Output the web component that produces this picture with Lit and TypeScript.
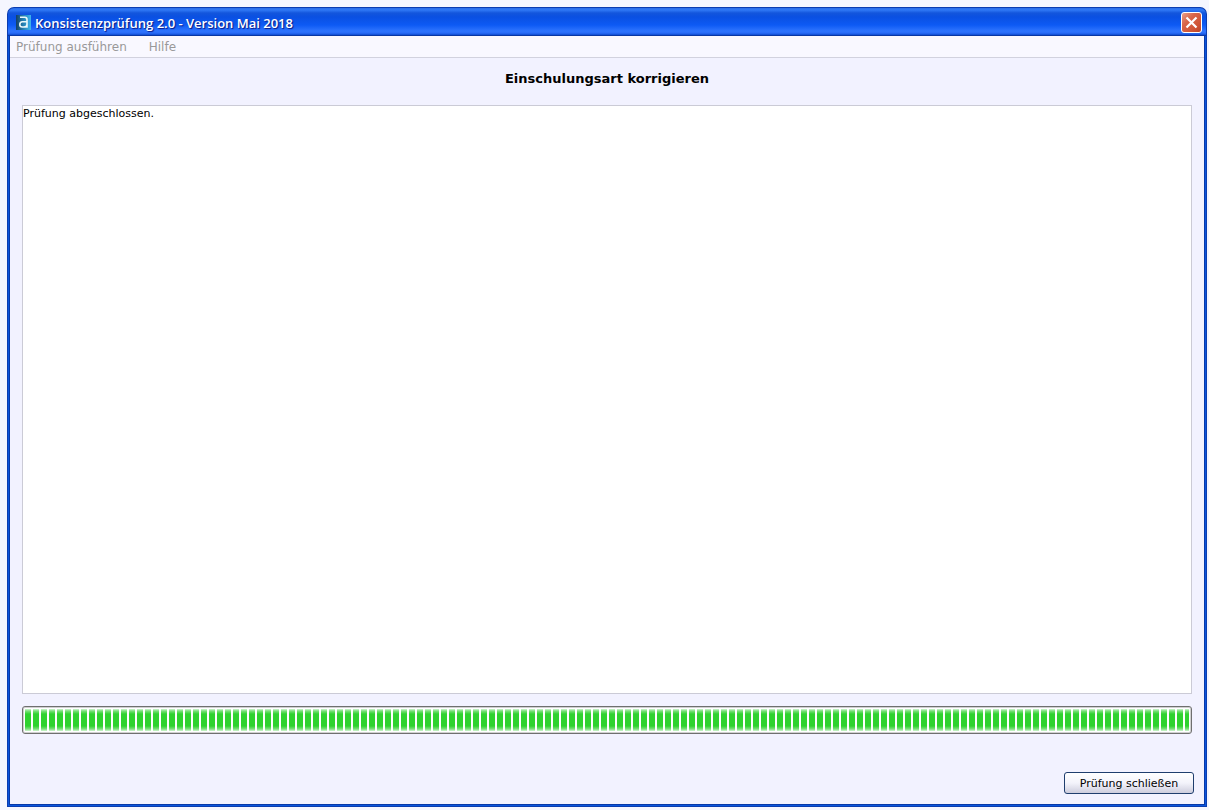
import { LitElement, html, css } from "lit";
import { customElement, property, state } from "lit/decorators.js";

@customElement("title-bar")
class TitleBar extends LitElement {
  @property() caption = "";

  static styles = css`
    :host {
      display: flex;
      align-items: center;
      gap: 4px;
      box-sizing: border-box;
      height: 29px;
      padding: 2px 4px 0 8px;
      border: 1px solid #0b3cb0;
      border-bottom-color: #0a37a4;
      border-radius: 7px 7px 0 0;
      background: linear-gradient(#2a6ce8 0, #2f78f6 2px, #1356dc 5px, #0a50e2 9px, #0d5af4 17px, #2e74fe 23px, #2a6cf8 25px, #0f4bd0 27px);
    }
    .logo {
      flex: none;
      width: 15px;
      height: 15px;
    }
    .caption {
      flex: 1;
      margin: 0;
      font: 600 13px/16px "Open Sans", "Noto Sans", sans-serif;
      color: #fff;
      text-shadow: 1px 1px 1px #0a1883;
      white-space: nowrap;
    }
    .close {
      flex: none;
      display: grid;
      place-items: center;
      box-sizing: border-box;
      width: 21px;
      height: 21px;
      padding: 0;
      border: 1px solid #fff;
      border-radius: 3px;
      background: linear-gradient(135deg, #e9a08c, #d8664a 35%, #cf5334 75%, #b8432a);
    }
  `;

  render() {
    return html`
      <svg class="logo" viewBox="0 0 15 15" aria-hidden="true">
        <defs>
          <linearGradient id="g" x1="0" x2="1" y1="0" y2="0">
            <stop offset="0" stop-color="#143f66" />
            <stop offset="0.5" stop-color="#2482b4" />
            <stop offset="1" stop-color="#3db4ee" />
          </linearGradient>
        </defs>
        <rect width="15" height="15" fill="url(#g)" />
        <path d="M4 2.2H8.8Q11 2.2 11 4.6V12.8M11 6.8H6.4Q3.8 6.8 3.8 9.5Q3.8 12 6.2 12H8Q11 12 11 9.4" fill="none" stroke="#e9f8fa" stroke-width="1.6" />
      </svg>
      <h1 class="caption">${this.caption}</h1>
      <button class="close" type="button" aria-label="Schließen">
        <svg width="13" height="13" viewBox="0 0 13 13" aria-hidden="true">
          <path d="M1.5 1.5L11.5 11.5M11.5 1.5L1.5 11.5" stroke="#fff" stroke-width="2.2" />
        </svg>
      </button>
    `;
  }
}

@customElement("app-root")
class AppRoot extends LitElement {
  @state() private menus = ["Prüfung ausführen", "Hilfe"];
  @state() private log = "Prüfung abgeschlossen.";
  @state() private done = 100;

  static styles = css`
    :host {
      display: flex;
      box-sizing: border-box;
      min-height: 100vh;
      padding: 7px 2px 3px 7px;
      background: #f5f6ff;
      color: #000;
      font: 11px/16px "DejaVu Sans", sans-serif;
    }
    .window {
      flex: 1;
      display: flex;
      flex-direction: column;
      min-width: 0;
    }
    .body {
      flex: 1;
      display: flex;
      flex-direction: column;
      border: solid #0b3cb0;
      border-width: 0 1px 1px;
      background: #0a55dc;
      padding: 0 1px 1px;
    }
    .client {
      flex: 1;
      display: flex;
      flex-direction: column;
      border: solid #0838a8;
      border-width: 0 1px 1px;
      background: #f2f2ff;
    }
    .menu {
      display: flex;
      gap: 22px;
      height: 21px;
      padding: 0 6px;
      border-bottom: 1px solid #d2d2de;
      background: #f9f8ff;
    }
    .item {
      padding: 0;
      border: 0;
      background: none;
      color: #999;
      font: 12px/20px "DejaVu Sans", sans-serif;
    }
    .main {
      flex: 1;
      display: flex;
      flex-direction: column;
      padding: 13px 12px 10px;
    }
    .heading {
      margin: 0 0 18px;
      font: bold 13px/16px "DejaVu Sans", sans-serif;
      text-align: center;
    }
    .log {
      flex: 1;
      box-sizing: border-box;
      width: 100%;
      min-height: 80px;
      margin: 0;
      padding: 0;
      border: 1px solid #cbcbd6;
      outline: 0;
      resize: none;
      background: #fff;
      color: #000;
      font: 11px/16px "DejaVu Sans", sans-serif;
    }
    .progress {
      appearance: none;
      display: block;
      box-sizing: border-box;
      width: 100%;
      height: 28px;
      margin: 12px 0 38px;
      padding: 2px;
      border: 1px solid #6f6f6f;
      border-radius: 3px;
      background: #fff;
      box-shadow: inset 0 0 0 1px #d0d0d0;
    }
    .progress::-webkit-progress-bar {
      background: #fff;
    }
    .progress::-webkit-progress-value {
      background:
        repeating-linear-gradient(90deg, transparent 0 6px, #fff 6px 8px),
        linear-gradient(#d2f4d2, #7be07b 2px, #2fd22f 5px, #2fd22f 17px, #7be07b 20px, #d2f4d2);
    }
    .actions {
      display: flex;
      justify-content: flex-end;
      margin-right: -2px;
    }
    .button {
      min-width: 130px;
      height: 22px;
      padding: 1px 12px 0;
      border: 1px solid #1f3e6e;
      border-radius: 3px;
      background: linear-gradient(#fff, #f3f3fb 50%, #cdcddd);
      color: #000;
      font: 11px/16px "DejaVu Sans", sans-serif;
    }
  `;

  render() {
    return html`
      <div class="window">
        <title-bar caption="Konsistenzprüfung 2.0 - Version Mai 2018"></title-bar>
        <div class="body">
          <div class="client">
            <nav class="menu">
              ${this.menus.map((m) => html`<button class="item" type="button" disabled>${m}</button>`)}
            </nav>
            <main class="main">
              <h2 class="heading" id="heading">Einschulungsart korrigieren</h2>
              <textarea class="log" readonly aria-labelledby="heading" .value=${this.log}></textarea>
              <progress class="progress" max="100" .value=${this.done} aria-labelledby="heading"></progress>
              <div class="actions">
                <button class="button" type="button">Prüfung schließen</button>
              </div>
            </main>
          </div>
        </div>
      </div>
    `;
  }
}
